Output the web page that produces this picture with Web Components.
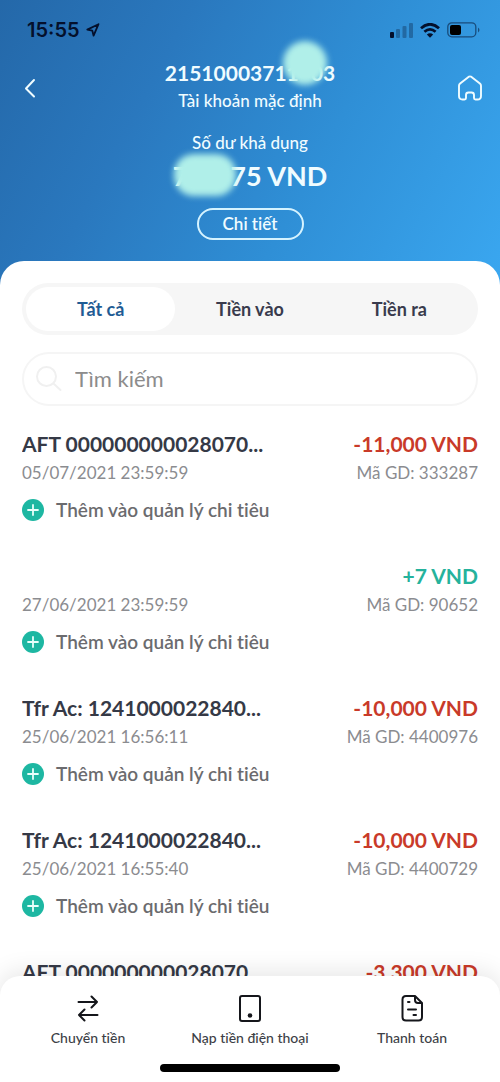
<!DOCTYPE html>
<html lang="vi">
<head>
<meta charset="utf-8">
<meta name="viewport" content="width=device-width, initial-scale=1">
<title>Tài khoản mặc định</title>
<style>
  body { margin: 0; background: #fff; font-family: Lato, "Noto Sans", sans-serif; color: #353946; font-variant-ligatures: none; }
</style>
</head>
<body>
<bank-app></bank-app>
<script>
const define = (name, html, setup) => customElements.define(name, class extends HTMLElement {
  constructor() {
    super();
    const tpl = document.createElement('template');
    tpl.innerHTML = html;
    this.attachShadow({ mode: 'open' }).append(tpl.content.cloneNode(true));
  }
  connectedCallback() { if (setup) setup(this, this.shadowRoot); }
});

define('status-bar', `
<style>
  :host { display: flex; align-items: center; justify-content: space-between; height: 60px; padding: 0 20px 0 27px; color: #04102c; }
  .time, .signals { display: flex; align-items: center; gap: 6px; }
  .signals { gap: 7px; }
  time { font: 600 20px/24px Inter, sans-serif; }
  svg { display: block; }
</style>
<div class="time"><time>15:55</time>
  <svg width="14" height="14" viewBox="0 0 14 14" fill="none" stroke="currentColor" stroke-width="1.8" stroke-linejoin="round"><path d="M12.5 1.2 1.3 6.6 6.3 7.6 7.6 12.7Z"/></svg>
</div>
<div class="signals">
  <svg width="23" height="15" viewBox="0 0 23 15" fill="currentColor"><rect y="9" width="4" height="6" rx="1"/><g opacity=".3"><rect x="6" y="6" width="4" height="9" rx="1"/><rect x="12.500" y="3" width="4" height="12" rx="1"/><rect x="19" y="0" width="4" height="15" rx="1"/></g></svg>
  <svg width="20" height="15" viewBox="0 0 20 15" fill="none" stroke="currentColor" stroke-width="2.800"><path d="M1 5.200Q10-2.600 19 5.200M4.400 8.700Q10 4 15.600 8.700"/><path d="M10 14.700 6.800 11.500Q10 8.900 13.200 11.500Z" fill="currentColor" stroke="none"/></svg>
  <svg width="33" height="16" viewBox="0 0 33 16"><rect x=".8" y=".8" width="28" height="14" rx="4" fill="none" stroke="currentColor" stroke-width="1.300" opacity=".55"/><rect x="3" y="3" width="11" height="10" rx="2" fill="#000"/><path d="M31 5.500q3 2.500 0 5Z" fill="currentColor" opacity=".55"/></svg>
</div>`);

define('privacy-smudge', `
<style>
  :host { display: inline-block; position: relative; width: var(--gap); height: 1em; vertical-align: baseline; }
  i { position: absolute; left: 50%; top: 50%; width: var(--w); height: var(--h); border-radius: var(--r); transform: translate(-50%, -50%); translate: var(--dx) var(--dy); background: #b0efe9; filter: blur(3px); }
</style><i></i>`);

define('account-header', `
<style>
  :host { display: block; padding-bottom: 45px; color: #f0fcff; background: linear-gradient(118deg, #2468a9 0%, #2a78be 30%, #2f8fd6 62%, #3aa7f0 100%); }
  .bar { display: grid; grid-template-columns: 60px 1fr 60px; align-items: start; }
  .mid { display: flex; flex-direction: column; align-items: center; text-align: center; }
  h1 { margin: 0; font-size: 21px; line-height: 24px; font-weight: 700; }
  p { margin: 0; font-size: 17px; line-height: 24px; font-weight: 500; }
  .sub { margin-top: 4px; }
  .label { margin-top: 18px; }
  .balance { font-size: 27px; line-height: 32px; font-weight: 700; margin-top: 4px; }
  button { font: inherit; color: inherit; background: none; border: 0; padding: 0; cursor: pointer; }
  .icon { display: grid; place-items: center; height: 56px; }
  .detail { margin-top: 16px; width: 107px; height: 32px; box-sizing: border-box; border: 2px solid #d5f3ff; border-radius: 16px; font-size: 17px; line-height: 24px; font-weight: 600; }
  h1 privacy-smudge { --gap: 12px; --w: 44px; --h: 44px; --r: 50%; --dx: 0px; --dy: -8px; }
  .balance privacy-smudge { --gap: 42px; --w: 62px; --h: 42px; --r: 20px; --dx: -4px; --dy: 2px; }
</style>
<status-bar></status-bar>
<div class="bar">
  <button class="icon" aria-label="Quay lại"><svg width="12" height="20" viewBox="0 0 12 20" fill="none" stroke="currentColor" stroke-width="2" stroke-linecap="round" stroke-linejoin="round"><path d="M10 2 2 10.500 10 18.500"/></svg></button>
  <div class="mid">
    <h1>21510003711<privacy-smudge></privacy-smudge>03</h1>
    <p class="sub">Tài khoản mặc định</p>
    <p class="label">Số dư khả dụng</p>
    <p class="balance">7<privacy-smudge></privacy-smudge>75 VND</p>
    <button class="detail">Chi tiết</button>
  </div>
  <button class="icon" aria-label="Trang chủ"><svg width="26" height="26" viewBox="0 0 26 26" fill="none" stroke="currentColor" stroke-width="1.900" stroke-linejoin="round"><path d="M2 10.800Q2 9.400 3.100 8.500L11.500 1.900Q13 .9 14.500 1.900L22.900 8.500Q24 9.400 24 10.800V21Q24 24.500 20.500 24.500H18.500Q17 24.500 17 23V20Q17 17.500 14.500 17.500H11.500Q9 17.500 9 20V23Q9 24.500 7.500 24.500H5.500Q2 24.500 2 21Z"/></svg></button>
</div>`);

define('filter-tabs', `
<style>
  :host { display: grid; grid-template-columns: repeat(3, 1fr); padding: 4px; height: 52px; box-sizing: border-box; border-radius: 26px; background: #f6f6f6; }
  button { border: 0; border-radius: 22px; background: none; color: #393b4d; font: 700 18px/24px Lato, "Noto Sans", sans-serif; font-variant-ligatures: none; cursor: pointer; }
  button[aria-selected="true"] { background: #fff; color: #1f5c94; }
</style>
<button role="tab" aria-selected="true">Tất cả</button><button role="tab" aria-selected="false">Tiền vào</button><button role="tab" aria-selected="false">Tiền ra</button>`,
(host, root) => {
  host.setAttribute('role', 'tablist');
  const tabs = root.querySelectorAll('button');
  tabs.forEach(t => t.onclick = () => tabs.forEach(o => o.setAttribute('aria-selected', o === t)));
});

define('search-box', `
<style>
  :host { display: block; }
  label { display: flex; align-items: center; gap: 13px; height: 54px; box-sizing: border-box; border: 2px solid #f5f5f5; border-radius: 27px; padding: 0 12px; }
  svg { flex: none; }
  input { flex: 1; min-width: 0; border: 0; outline: 0; padding: 0; background: none; color: #393b4d; font: 400 22px/28px Lato, "Noto Sans", sans-serif; }
  input::placeholder { color: #8c8c8c; opacity: 1; }
</style>
<label><svg width="26" height="26" viewBox="0 0 26 26" fill="none" stroke="#f0f0f0" stroke-width="2" stroke-linecap="round"><circle cx="10.500" cy="10.500" r="9.500"/><path d="m18 18 6.500 6"/></svg>
<input type="search" placeholder="Tìm kiếm" aria-label="Tìm kiếm"></label>`);

define('transaction-item', `
<style>
  :host { display: block; }
  .row { display: flex; justify-content: space-between; gap: 16px; white-space: nowrap; }
  .main { font-size: 21px; line-height: 28px; min-height: 28px; font-weight: 700; color: #353946; }
  .meta { font-size: 17px; line-height: 30px; color: #8b8c90; }
  .amount { color: #c93a29; margin-left: auto; }
  :host([income]) .amount { color: #25b29c; }
  button { display: flex; align-items: center; gap: 12px; height: 24px; margin-top: 10px; padding: 0; border: 0; background: none; color: #6b6b6e; font: 600 19px/24px Lato, "Noto Sans", sans-serif; font-variant-ligatures: none; cursor: pointer; }
</style>
<div class="row main"><slot name="title"></slot><span class="amount"><slot name="amount"></slot></span></div>
<div class="row meta"><slot name="date"></slot><slot name="code"></slot></div>
<button><svg width="22" height="22" viewBox="0 0 22 22"><circle cx="11" cy="11" r="11" fill="#1db7a2"/><path d="M11 6v10M6 11h10" stroke="#e8fffb" stroke-width="1.800" stroke-linecap="round"/></svg>Thêm vào quản lý chi tiêu</button>`);

define('nav-action', `
<style>
  :host { display: block; min-width: 0; }
  a { display: flex; flex-direction: column; align-items: center; gap: 6px; color: #3d3f47; text-decoration: none; font-size: 14px; line-height: 20px; font-weight: 500; white-space: nowrap; }
  ::slotted(svg) { display: block; color: #15161b; }
</style>
<a href="#"><slot name="icon"></slot><span><slot></slot></span></a>`);

define('bottom-nav', `
<style>
  :host { display: block; position: relative; flex: none; background: #fff; border-radius: 20px 20px 0 0; box-shadow: 0 -4px 24px rgba(0,0,0,.1); padding: 18px 7px 10px; }
  nav { display: grid; grid-template-columns: repeat(3, 1fr); }
  .home { width: 37%; height: 8px; margin: 16px auto 0; border-radius: 4px; background: #000; }
  svg { fill: none; stroke: currentColor; stroke-width: 2; stroke-linecap: round; stroke-linejoin: round; }
</style>
<nav>
  <nav-action><svg slot="icon" width="28" height="28" viewBox="0 0 28 28"><path d="M4.500 8H23M17.500 2.500 23 8 17.500 13.500M23.500 21H5M10.500 15.500 5 21 10.500 26.500"/></svg>Chuyển tiền</nav-action>
  <nav-action><svg slot="icon" width="28" height="28" viewBox="0 0 28 28"><rect x="4" y="2" width="20" height="25" rx="2"/><circle cx="14" cy="21.500" r="2.300" fill="currentColor" stroke="none"/></svg>Nạp tiền điện thoại</nav-action>
  <nav-action><svg slot="icon" width="28" height="28" viewBox="0 0 28 28"><path d="M17 2H8Q4.500 2 4.500 5.500V23Q4.500 26.500 8 26.500H20.500Q24 26.500 24 23V9ZM17 2V6Q17 9 20 9H24M10 8h1.500M10 15.500h8M15.500 21h2.500"/></svg>Thanh toán</nav-action>
</nav>
<div class="home"></div>`);

define('bank-app', `
<style>
  :host { display: flex; flex-direction: column; height: 100vh; overflow: hidden; }
  account-header { flex: none; }
  main { flex: 1; min-height: 0; display: flex; flex-direction: column; margin: -24px 0 -20px; padding: 22px 22px 0; background: #fff; border-radius: 24px 24px 0 0; }
  filter-tabs, search-box { flex: none; }
  search-box { margin-top: 17px; }
  .list { flex: 1; min-height: 0; margin-top: 24px; padding-bottom: 20px; overflow-y: auto; scrollbar-width: none; display: flex; flex-direction: column; gap: 40px; }
  transaction-item { flex: none; }
</style>
<account-header></account-header>
<main>
  <filter-tabs></filter-tabs>
  <search-box></search-box>
  <div class="list">
    <transaction-item><span slot="title">AFT 000000000028070...</span><span slot="amount">-11,000 VND</span><span slot="date">05/07/2021 23:59:59</span><span slot="code">Mã GD: 333287</span></transaction-item>
    <transaction-item income><span slot="amount">+7 VND</span><span slot="date">27/06/2021 23:59:59</span><span slot="code">Mã GD: 90652</span></transaction-item>
    <transaction-item><span slot="title">Tfr Ac: 1241000022840...</span><span slot="amount">-10,000 VND</span><span slot="date">25/06/2021 16:56:11</span><span slot="code">Mã GD: 4400976</span></transaction-item>
    <transaction-item><span slot="title">Tfr Ac: 1241000022840...</span><span slot="amount">-10,000 VND</span><span slot="date">25/06/2021 16:55:40</span><span slot="code">Mã GD: 4400729</span></transaction-item>
    <transaction-item><span slot="title">AFT 000000000028070...</span><span slot="amount">-3,300 VND</span></transaction-item>
  </div>
</main>
<bottom-nav></bottom-nav>`);
</script>
</body>
</html>
